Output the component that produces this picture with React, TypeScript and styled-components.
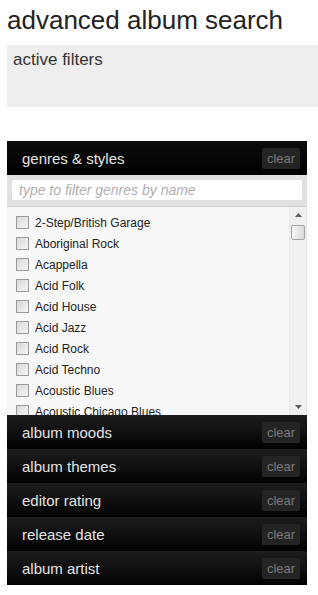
import styled, { createGlobalStyle } from 'styled-components';

const GlobalStyle = createGlobalStyle`
    html, body {
        margin: 0;
        padding: 0;
        background: #fff;
        font-family: "Liberation Sans", Arial, sans-serif;
        overflow: hidden;
    }
`

const Page = styled.div`
    padding: 5px 0 0 7px;
    width: 318px;
    box-sizing: border-box;
`

const Title = styled.h1`
    margin: 0;
    font-size: 26px;
    line-height: 30px;
    font-weight: normal;
    color: #222;
`

const ActiveFilters = styled.div`
    margin-top: 10px;
    height: 62px;
    box-sizing: border-box;
    padding: 5px 6px;
    background: #eee;
    border-radius: 2px 0 0 2px;
    font-size: 17px;
    line-height: 20px;
    color: #333;
`

const Panel = styled.div`
    margin-top: 34px;
    width: 300px;
    display: flex;
    flex-direction: column;
`

const SectionHeader = styled.div<{ $solid?: boolean }>`
    height: 34px;
    box-sizing: border-box;
    display: flex;
    align-items: center;
    justify-content: space-between;
    padding: 0 7px 0 15px;
    background: ${p => p.$solid
        ? 'linear-gradient(#0c0c0c, #000)'
        : 'linear-gradient(#1d1d1d, #020202)'};
    color: #e4e4e4;
    font-size: 15px;
`

const ClearButton = styled.button`
    width: 38px;
    height: 21px;
    padding: 0;
    border: none;
    border-radius: 2px;
    background: #242424;
    color: #7a7a7a;
    font-family: "Liberation Sans", Arial, sans-serif;
    font-size: 13px;
    line-height: 21px;
    text-align: center;
`

const FilterBar = styled.div`
    background: #e1e1e1;
    padding: 5px 5px 6px;
`

const FilterInput = styled.input`
    display: block;
    width: 100%;
    height: 20px;
    box-sizing: border-box;
    border: none;
    border-radius: 2px;
    padding: 0 7px;
    background: #fff;
    font-family: "Liberation Sans", Arial, sans-serif;
    font-size: 14px;
    outline: none;
    &::placeholder {
        color: #b0b0b0;
        font-style: italic;
    }
`

const ListBox = styled.div`
    height: 208px;
    display: flex;
    border-top: 1px solid #d0d0d0;
    border-right: 1px solid #e4e4e4;
    background: #f8f8f8;
`

const GenreList = styled.ul`
    flex: 1;
    margin: 0;
    padding: 5px 0 0;
    list-style: none;
    overflow: hidden;
`

const GenreItem = styled.li`
    height: 21px;
    display: flex;
    align-items: center;
    padding-left: 9px;
    font-size: 12px;
    color: #222;
    white-space: nowrap;
`

const Check = styled.input`
    appearance: none;
    width: 13px;
    height: 13px;
    margin: 0 6px 0 0;
    border: 1px solid #9a9a9a;
    background: linear-gradient(135deg, #d8d8d8, #f6f6f6);
    flex: none;
`

const ScrollBar = styled.div`
    width: 16px;
    flex: none;
    display: flex;
    flex-direction: column;
    background: #f0f0f0;
    border-left: 1px solid #e8e8e8;
`

const ScrollArrow = styled.div`
    height: 16px;
    display: flex;
    align-items: center;
    justify-content: center;
    flex: none;
`

const ScrollTrack = styled.div`
    flex: 1;
    padding-top: 2px;
`

const ScrollThumb = styled.div`
    height: 15px;
    margin: 0 1px;
    box-sizing: border-box;
    border: 1px solid #a4a4a4;
    border-radius: 2px;
    background: linear-gradient(90deg, #f6f6f6, #dadada);
`

const Arrow = ({ down }: { down?: boolean }) => (
    <svg width='7' height='4' viewBox='0 0 7 4'>
        <path d={down ? 'M0 0h7L3.5 4z' : 'M0 4h7L3.5 0z'} fill='#5a5a5a' />
    </svg>
)

const genres = [
    '2-Step/British Garage', 'Aboriginal Rock', 'Acappella', 'Acid Folk', 'Acid House',
    'Acid Jazz', 'Acid Rock', 'Acid Techno', 'Acoustic Blues', 'Acoustic Chicago Blues',
]

const sections = ['album moods', 'album themes', 'editor rating', 'release date', 'album artist']

export default function App() {
    return (
        <Page>
            <GlobalStyle />
            <Title>advanced album search</Title>
            <ActiveFilters>active filters</ActiveFilters>
            <Panel>
                <SectionHeader $solid>
                    <span>genres &amp; styles</span>
                    <ClearButton>clear</ClearButton>
                </SectionHeader>
                <FilterBar>
                    <FilterInput placeholder='type to filter genres by name' />
                </FilterBar>
                <ListBox>
                    <GenreList>
                        {genres.map(g => (
                            <GenreItem key={g}>
                                <Check type='checkbox' />
                                {g}
                            </GenreItem>
                        ))}
                    </GenreList>
                    <ScrollBar>
                        <ScrollArrow><Arrow /></ScrollArrow>
                        <ScrollTrack><ScrollThumb /></ScrollTrack>
                        <ScrollArrow><Arrow down /></ScrollArrow>
                    </ScrollBar>
                </ListBox>
                {sections.map(s => (
                    <SectionHeader key={s}>
                        <span>{s}</span>
                        <ClearButton>clear</ClearButton>
                    </SectionHeader>
                ))}
            </Panel>
        </Page>
    )
}
